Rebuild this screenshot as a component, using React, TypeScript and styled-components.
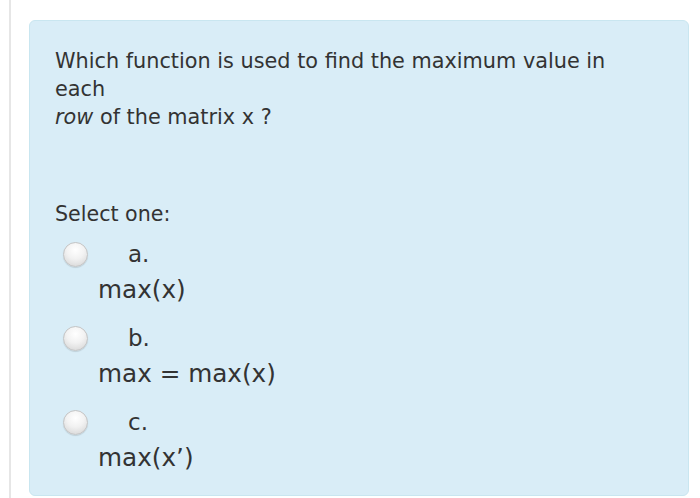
import React from "react";
import styled, { createGlobalStyle } from "styled-components";

const GlobalStyle = createGlobalStyle`
  html, body {
    margin: 0;
    padding: 0;
    background: #fff;
  }
  body {
    font-family: "DejaVu Sans", Verdana, sans-serif;
    color: #333;
  }
`;

const Page = styled.div`
  height: 498px;
  margin-left: 9px;
  border-left: 2px solid #e6e6e6;
  padding: 20px 11px 0 18px;
  box-sizing: border-box;
`;

const Panel = styled.div`
  background: #d9edf7;
  border: 1px solid #c9e6f0;
  border-radius: 6px;
  padding: 26px 26px 14px 25px;
  height: 476px;
  box-sizing: border-box;
`;

const Question = styled.div`
  font-size: 20.8px;
  line-height: 28px;
  max-width: 590px;
  color: #333;
`;

const Prompt = styled.div`
  margin-top: 69px;
  font-size: 20.6px;
  line-height: 28px;
`;

const Options = styled.div`
  margin-top: 12px;
  display: flex;
  flex-direction: column;
  gap: 16px;
`;

const Option = styled.label`
  display: flex;
  flex-direction: column;
`;

const OptionHead = styled.div`
  display: flex;
  align-items: center;
  height: 28px;
  padding-left: 8px;
`;

const Radio = styled.span`
  width: 25px;
  height: 25px;
  border-radius: 50%;
  box-sizing: border-box;
  border: 1px solid #c4c4c4;
  background: radial-gradient(circle at 50% 30%, #ffffff 0%, #f2f2f2 45%, #d2d2d2 100%);
  box-shadow: 0 1px 1px rgba(0, 0, 0, 0.12);
  flex-shrink: 0;
`;

const Letter = styled.span`
  margin-left: 40px;
  font-size: 23px;
  line-height: 28px;
`;

const Answer = styled.div`
  padding-left: 43px;
  font-size: 24.7px;
  line-height: 36px;
  margin-top: 4px;
`;

const options = [
  { letter: "a.", text: "max(x)" },
  { letter: "b.", text: "max = max(x)" },
  { letter: "c.", text: "max(x\u2019)" },
];

export default function App() {
  return (
    <>
      <GlobalStyle />
      <Page>
        <Panel>
          <Question>
            Which function is used to find the maximum value in each
            <br />
            <em>row</em> of the matrix x ?
          </Question>
          <Prompt>Select one:</Prompt>
          <Options>
            {options.map((o) => (
              <Option key={o.letter}>
                <OptionHead>
                  <Radio />
                  <Letter>{o.letter}</Letter>
                </OptionHead>
                <Answer>{o.text}</Answer>
              </Option>
            ))}
          </Options>
        </Panel>
      </Page>
    </>
  );
}
